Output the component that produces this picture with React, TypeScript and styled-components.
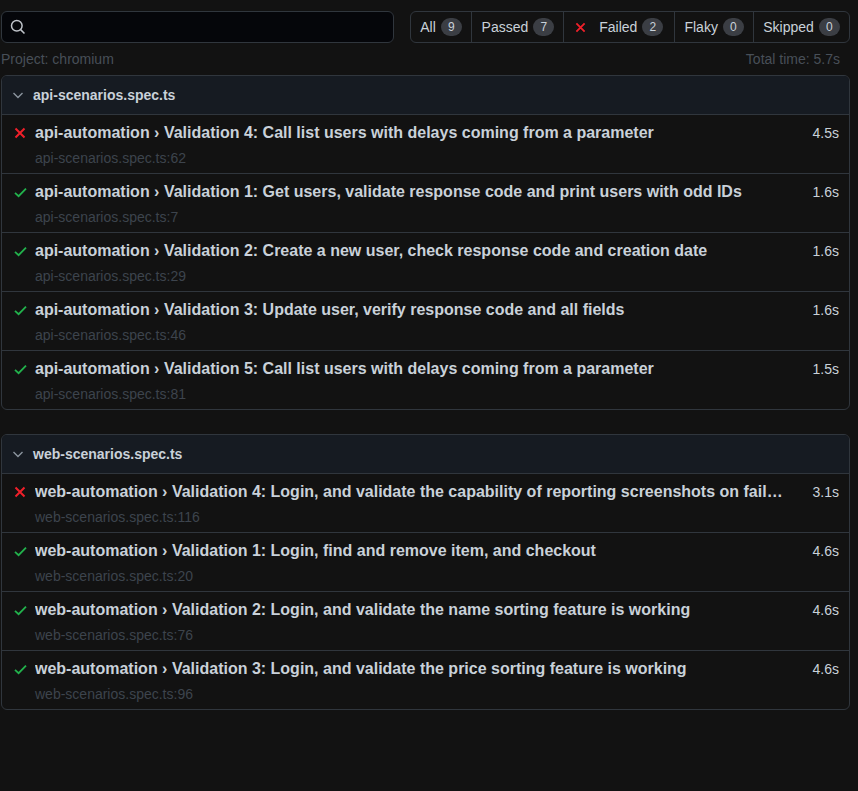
import React from "react";
import styled, { createGlobalStyle } from "styled-components";

const GlobalStyle = createGlobalStyle`
  html, body { margin: 0; padding: 0; background: #121212; }
  body {
    font-family: "Liberation Sans", Arial, Helvetica, sans-serif;
    font-size: 14px;
    color: #c9d1d9;
  }
  * { box-sizing: border-box; }
`;

const Page = styled.div`
  padding: 11px 8px 40px 1px;
  display: flex;
  flex-direction: column;
`;

const TopBar = styled.div`
  display: flex;
  align-items: center;
  gap: 16px;
`;

const SearchBox = styled.div`
  width: 393px;
  height: 32px;
  display: flex;
  align-items: center;
  gap: 8px;
  padding: 0 8px;
  background: #05060a;
  border: 1px solid #30363d;
  border-radius: 6px;
  color: #8b949e;
`;

const SearchInput = styled.input`
  flex: 1;
  background: transparent;
  border: none;
  outline: none;
  color: #c9d1d9;
  font: inherit;
`;

const FilterGroup = styled.div`
  margin-left: auto;
  display: flex;
  height: 32px;
  border: 1px solid #30363d;
  border-radius: 6px;
  overflow: hidden;
`;

const FilterItem = styled.div<{ $w: number }>`
  width: ${(p) => p.$w}px;
  display: flex;
  align-items: center;
  justify-content: center;
  gap: 5px;
  color: #c9d1d9;
  font-size: 14px;
  & + & { border-left: 1px solid #30363d; }
`;

const FailedLabel = styled.span`
  margin-left: 8px;
`;

const Counter = styled.span`
  display: inline-flex;
  align-items: center;
  justify-content: center;
  min-width: 21px;
  height: 18px;
  padding: 0 6px;
  border-radius: 10px;
  background: #3b3e44;
  color: #c9d1d9;
  font-size: 12px;
`;

const MetaLine = styled.div`
  display: flex;
  justify-content: space-between;
  padding: 8px 10px 8px 0;
  line-height: 16px;
  color: #484f58;
  font-size: 14px;
`;

const FileChip = styled.section`
  border: 1px solid #30363d;
  border-radius: 6px;
  overflow: hidden;
  & + & { margin-top: 24px; }
`;

const ChipHeader = styled.div`
  display: flex;
  align-items: center;
  gap: 9px;
  height: 38px;
  padding: 0 10px;
  background: #161b22;
  font-weight: bold;
  font-size: 14px;
  color: #c9d1d9;
`;

const TestRow = styled.div`
  display: flex;
  align-items: flex-start;
  padding: 8px 10px 4px 11px;
  height: 59px;
  border-top: 1px solid #30363d;
`;

const StatusIcon = styled.div`
  width: 14px;
  height: 20px;
  display: flex;
  align-items: center;
  justify-content: center;
  margin-right: 8px;
  flex: none;
`;

const TestBody = styled.div`
  flex: 1;
  min-width: 0;
  display: flex;
  flex-direction: column;
  gap: 5px;
`;

const TestTitle = styled.div`
  font-weight: bold;
  font-size: 16px;
  line-height: 20px;
  color: #c9d1d9;
  white-space: nowrap;
  overflow: hidden;
  text-overflow: ellipsis;
`;

const TestLocation = styled.div`
  font-size: 14px;
  line-height: 20px;
  color: #3d444d;
`;

const Duration = styled.div`
  flex: none;
  margin-left: 29px;
  line-height: 20px;
  font-size: 14px;
  color: #c9d1d9;
`;

const Cross = ({ size = 12 }: { size?: number }) => (
  <svg width={size} height={size} viewBox="0 0 12 12">
    <path d="M1.5 1.5 L10.5 10.5 M10.5 1.5 L1.5 10.5" stroke="#f0202a" strokeWidth="2" fill="none" />
  </svg>
);

const Check = () => (
  <svg width="13" height="11" viewBox="0 0 13 11">
    <path d="M1 5.8 L4.6 9.2 L12 1.6" stroke="#22b24c" strokeWidth="1.8" fill="none" />
  </svg>
);

const Chevron = () => (
  <svg width="12" height="12" viewBox="0 0 12 12">
    <path d="M1.5 4 L6 8.5 L10.5 4" stroke="#8b949e" strokeWidth="1.4" fill="none" />
  </svg>
);

const SearchIcon = () => (
  <svg width="16" height="16" viewBox="0 0 16 16">
    <circle cx="6.8" cy="6.8" r="5.3" stroke="#c0c4ca" strokeWidth="1.5" fill="none" />
    <path d="M10.6 10.6 L14.5 14.5" stroke="#c0c4ca" strokeWidth="1.5" />
  </svg>
);

type Test = { ok: boolean; title: string; loc: string; dur: string };

const files: { name: string; tests: Test[] }[] = [
  {
    name: "api-scenarios.spec.ts",
    tests: [
      { ok: false, title: "api-automation › Validation 4: Call list users with delays coming from a parameter", loc: "api-scenarios.spec.ts:62", dur: "4.5s" },
      { ok: true, title: "api-automation › Validation 1: Get users, validate response code and print users with odd IDs", loc: "api-scenarios.spec.ts:7", dur: "1.6s" },
      { ok: true, title: "api-automation › Validation 2: Create a new user, check response code and creation date", loc: "api-scenarios.spec.ts:29", dur: "1.6s" },
      { ok: true, title: "api-automation › Validation 3: Update user, verify response code and all fields", loc: "api-scenarios.spec.ts:46", dur: "1.6s" },
      { ok: true, title: "api-automation › Validation 5: Call list users with delays coming from a parameter", loc: "api-scenarios.spec.ts:81", dur: "1.5s" },
    ],
  },
  {
    name: "web-scenarios.spec.ts",
    tests: [
      { ok: false, title: "web-automation › Validation 4: Login, and validate the capability of reporting screenshots on failure", loc: "web-scenarios.spec.ts:116", dur: "3.1s" },
      { ok: true, title: "web-automation › Validation 1: Login, find and remove item, and checkout", loc: "web-scenarios.spec.ts:20", dur: "4.6s" },
      { ok: true, title: "web-automation › Validation 2: Login, and validate the name sorting feature is working", loc: "web-scenarios.spec.ts:76", dur: "4.6s" },
      { ok: true, title: "web-automation › Validation 3: Login, and validate the price sorting feature is working", loc: "web-scenarios.spec.ts:96", dur: "4.6s" },
    ],
  },
];

export default function App() {
  return (
    <>
      <GlobalStyle />
      <Page>
        <TopBar>
          <SearchBox>
            <SearchIcon />
            <SearchInput />
          </SearchBox>
          <FilterGroup>
            <FilterItem $w={61}>All <Counter>9</Counter></FilterItem>
            <FilterItem $w={92}>Passed <Counter>7</Counter></FilterItem>
            <FilterItem $w={111}>
              <Cross size={11} />
              <FailedLabel>Failed</FailedLabel> <Counter>2</Counter>
            </FilterItem>
            <FilterItem $w={79}>Flaky <Counter>0</Counter></FilterItem>
            <FilterItem $w={96}>Skipped <Counter>0</Counter></FilterItem>
          </FilterGroup>
        </TopBar>
        <MetaLine>
          <span>Project: chromium</span>
          <span>Total time: 5.7s</span>
        </MetaLine>
        {files.map((f) => (
          <FileChip key={f.name}>
            <ChipHeader>
              <Chevron />
              {f.name}
            </ChipHeader>
            {f.tests.map((t) => (
              <TestRow key={t.loc}>
                <StatusIcon>{t.ok ? <Check /> : <Cross />}</StatusIcon>
                <TestBody>
                  <TestTitle>{t.title}</TestTitle>
                  <TestLocation>{t.loc}</TestLocation>
                </TestBody>
                <Duration>{t.dur}</Duration>
              </TestRow>
            ))}
          </FileChip>
        ))}
      </Page>
    </>
  );
}
